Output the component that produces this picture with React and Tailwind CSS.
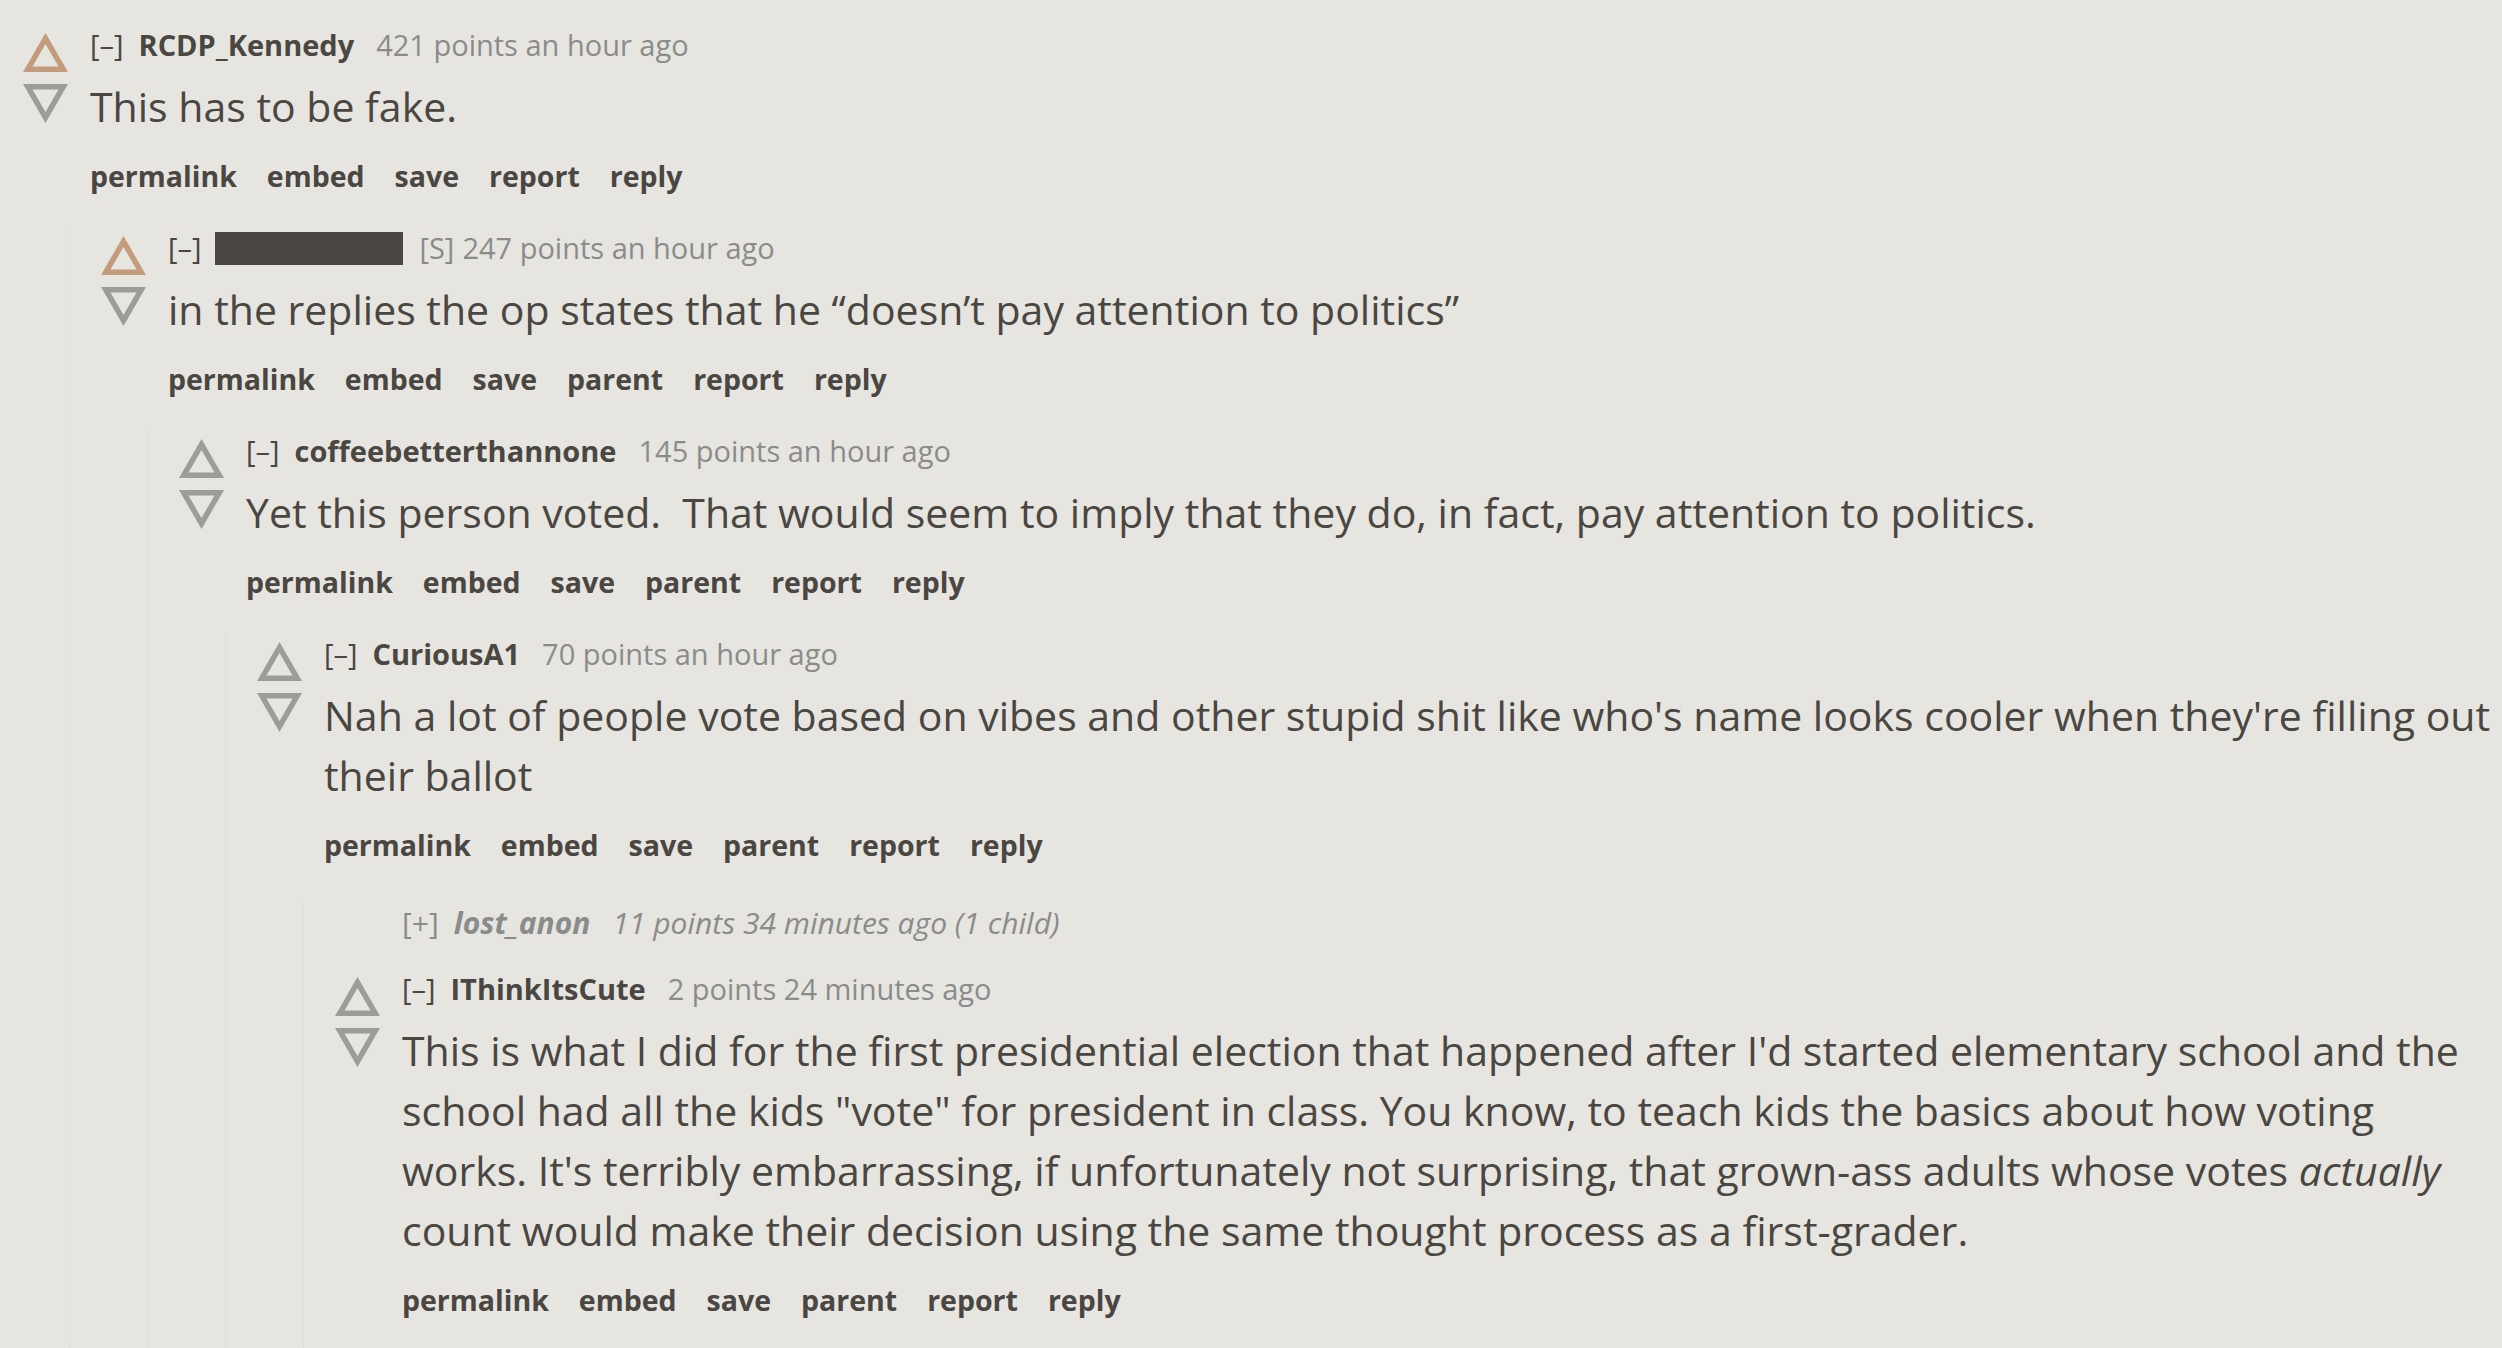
import React from 'react';

const FONT = { fontFamily: '"Open Sans", "Noto Sans", sans-serif' };

const UpArrow = ({ active }) => (
  <svg width="45" height="39" viewBox="0 0 45 39" className="block">
    <path
      fillRule="evenodd"
      d="M22.5 0L45 39H0Z M22.5 11L9.5 33.5H35.5Z"
      className={active ? 'fill-[#c49b7c]' : 'fill-[#9d9c98]'}
    />
  </svg>
);

const DownArrow = () => (
  <svg width="45" height="39" viewBox="0 0 45 39" className="block">
    <path
      fillRule="evenodd"
      d="M0 0H45L22.5 39Z M9.5 5.5H35.5L22.5 28Z"
      className="fill-[#9d9c98]"
    />
  </svg>
);

const thread = {
  user: 'RCDP_Kennedy',
  meta: '421 points an hour ago',
  up: true,
  body: ['This has to be fake.'],
  links: ['permalink', 'embed', 'save', 'report', 'reply'],
  children: [
    {
      redacted: true,
      meta: '247 points an hour ago',
      up: true,
      body: ['in the replies the op states that he \u201cdoesn\u2019t pay attention to politics\u201d'],
      links: ['permalink', 'embed', 'save', 'parent', 'report', 'reply'],
      children: [
        {
          user: 'coffeebetterthannone',
          meta: '145 points an hour ago',
          body: ['Yet this person voted.\u00a0 That would seem to imply that they do, in fact, pay attention to politics.'],
          links: ['permalink', 'embed', 'save', 'parent', 'report', 'reply'],
          children: [
            {
              user: 'CuriousA1',
              meta: '70 points an hour ago',
              body: [
                "Nah a lot of people vote based on vibes and other stupid shit like who's name looks cooler when they're filling out",
                'their ballot',
              ],
              links: ['permalink', 'embed', 'save', 'parent', 'report', 'reply'],
              children: [
                {
                  collapsed: true,
                  user: 'lost_anon',
                  meta: '11 points 34 minutes ago (1 child)',
                },
                {
                  user: 'IThinkItsCute',
                  meta: '2 points 24 minutes ago',
                  last: true,
                  body: [
                    "This is what I did for the first presidential election that happened after I'd started elementary school and the",
                    'school had all the kids "vote" for president in class. You know, to teach kids the basics about how voting',
                    <>
                      works. It's terribly embarrassing, if unfortunately not surprising, that grown-ass adults whose votes{' '}
                      <em>actually</em>
                    </>,
                    'count would make their decision using the same thought process as a first-grader.',
                  ],
                  links: ['permalink', 'embed', 'save', 'parent', 'report', 'reply'],
                },
              ],
            },
          ],
        },
      ],
    },
  ],
};

const Collapsed = ({ c }) => (
  <div className="pl-[67px] mt-[5px] mb-[27px] h-[40px] flex items-center whitespace-nowrap text-[30px] italic text-[#8b8b8b]">
    <span className="not-italic">[+]</span>
    <span className="ml-[15px] font-bold">{c.user}</span>
    <span className="ml-[22px]">{c.meta}</span>
  </div>
);

const Comment = ({ c }) => {
  if (c.collapsed) return <Collapsed c={c} />;
  return (
    <div>
      <div className="flex">
        <div className="w-[67px] shrink-0 pt-[8px] flex flex-col gap-[12px]">
          <UpArrow active={c.up} />
          <DownArrow />
        </div>
        <div className={c.last ? 'flex-1 pb-[300px]' : 'flex-1 pb-[32px]'}>
          <div className="h-[40px] flex items-center whitespace-nowrap text-[29px] text-[#8b8b8b]">
            <span className="text-[#4a4641]">[–]</span>
            {c.redacted ? (
              <>
                <span className="ml-[14px] inline-block w-[188px] h-[33px] bg-[#4a4641]" />
                <span className="ml-[16px]">[S]</span>
                <span className="ml-[8px]">{c.meta}</span>
              </>
            ) : (
              <>
                <span className="ml-[15px] font-bold text-[#4a4641]">{c.user}</span>
                <span className="ml-[22px]">{c.meta}</span>
              </>
            )}
          </div>
          <div className="mt-[11px] text-[41px] leading-[60px] text-[#4a4641] whitespace-nowrap">
            {c.body.map((line, i) => (
              <div key={i}>{line}</div>
            ))}
          </div>
          <div className="mt-[20px] h-[40px] flex items-center gap-[30px] text-[28.5px] font-bold text-[#4a4641]">
            {c.links.map((l) => (
              <span key={l}>{l}</span>
            ))}
          </div>
        </div>
      </div>
      {c.children && (
        <div className="ml-[46px] border-l border-dotted border-[#d6d6f2] pl-[31px]">
          {c.children.map((ch, i) => (
            <Comment key={i} c={ch} />
          ))}
        </div>
      )}
    </div>
  );
};

export default function App() {
  return (
    <div className="h-screen overflow-hidden bg-[#e6e5e0] pl-[23px] pt-[25px]" style={FONT}>
      <Comment c={thread} />
    </div>
  );
}
